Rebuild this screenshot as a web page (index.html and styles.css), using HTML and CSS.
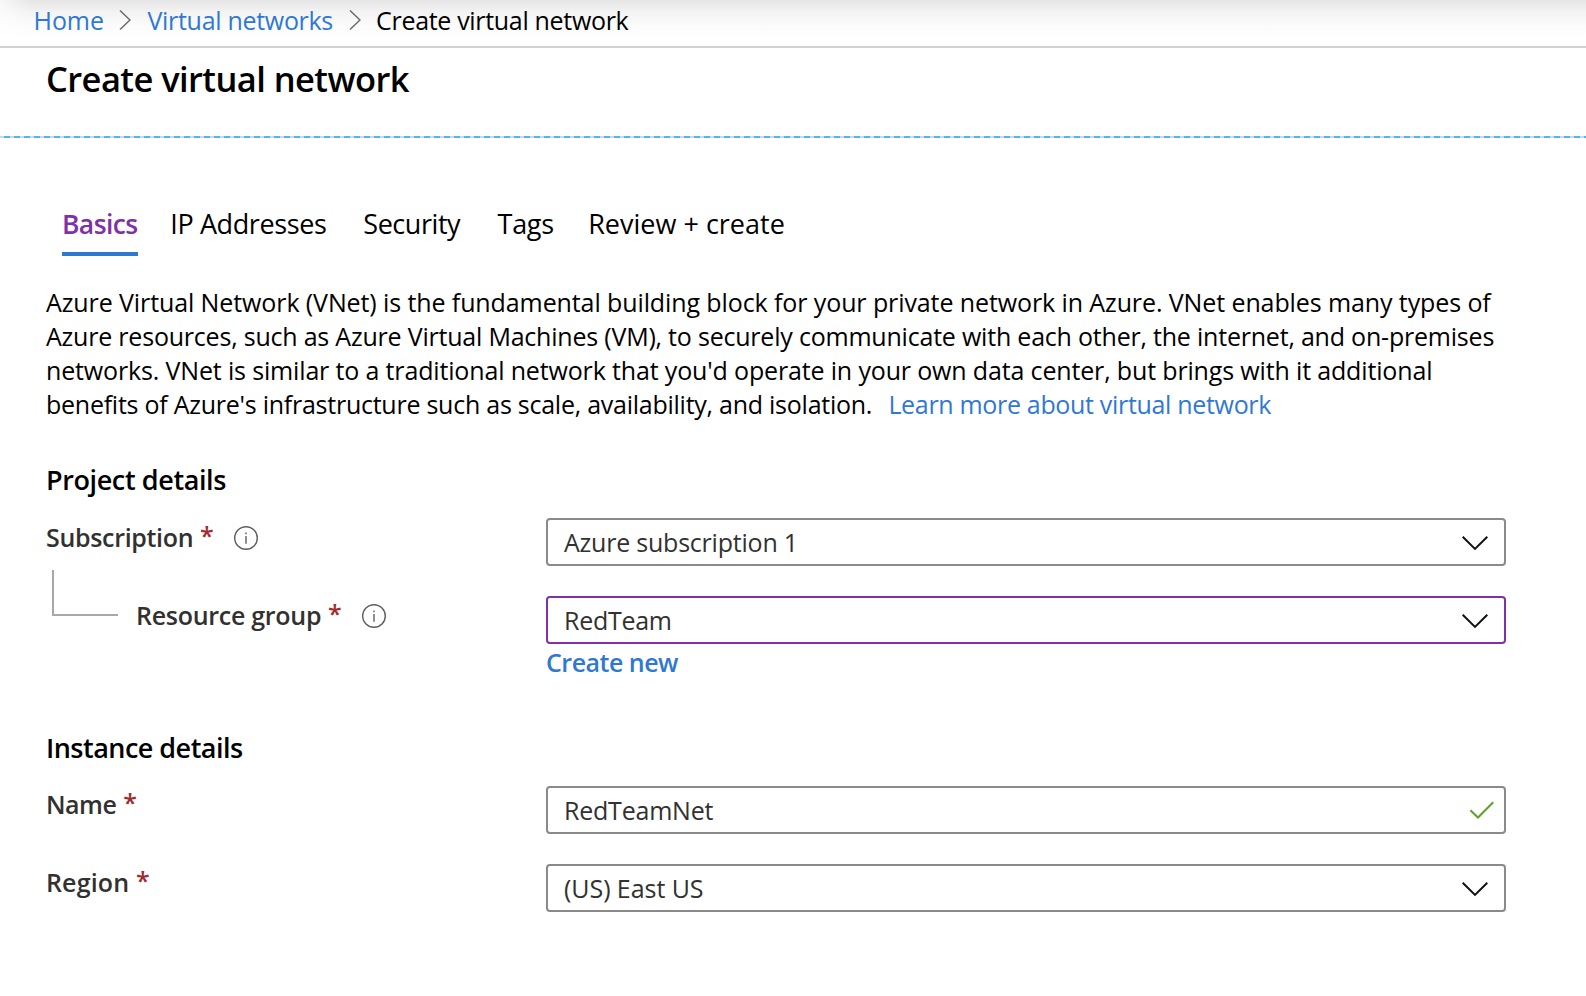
FILE: index.html
```html
<!DOCTYPE html>
<html lang="en">
<head>
<meta charset="utf-8">
<title>Create virtual network</title>
<link rel="stylesheet" href="styles.css">
</head>
<body>
<nav class="breadcrumb">
  <a class="crumb crumb-home">Home</a>
  <svg class="crumb-sep" width="12" height="22" viewBox="0 0 12 22"><path d="M1 1.5 11 11 1 20.5"/></svg>
  <a class="crumb crumb-list">Virtual networks</a>
  <svg class="crumb-sep" width="12" height="22" viewBox="0 0 12 22"><path d="M1 1.5 11 11 1 20.5"/></svg>
  <span class="crumb crumb-current">Create virtual network</span>
</nav>
<header class="page-head"><h1 class="page-title">Create virtual network</h1></header>
<div class="dashed-rule"></div>
<main class="content">
  <div class="tabs">
    <span class="tab tab-active">Basics</span>
    <span class="tab tab-ip">IP Addresses</span>
    <span class="tab tab-security">Security</span>
    <span class="tab tab-tags">Tags</span>
    <span class="tab tab-review">Review + create</span>
  </div>
  <p class="intro">
    <span class="line line-1">Azure Virtual Network (VNet) is the fundamental building block for your private network in Azure. VNet enables many types of</span>
    <span class="line line-2">Azure resources, such as Azure Virtual Machines (VM), to securely communicate with each other, the internet, and on-premises</span>
    <span class="line line-3">networks. VNet is similar to a traditional network that you'd operate in your own data center, but brings with it additional</span>
    <span class="line line-4">benefits of Azure's infrastructure such as scale, availability, and isolation.<a class="learn-more">Learn more about virtual network</a></span>
  </p>

  <section class="section project">
    <h2 class="section-title">Project details</h2>
    <div class="row">
      <div class="label"><span class="name-subscription">Subscription</span><span class="star">*</span>
        <svg class="info" width="24" height="24" viewBox="0 0 24 24"><circle cx="12" cy="12" r="11.3"/><path d="M12 9.9v7.8M12 6.5v1.8"/></svg>
      </div>
      <div class="field"><span class="value value-sub">Azure subscription 1</span>
        <svg class="chevron" width="28" height="16" viewBox="0 0 28 16"><path d="M1.7 1.7 14 13.9 26.3 1.7"/></svg>
      </div>
    </div>
    <div class="row">
      <div class="label label-nested"><span class="connector"></span><span class="name-group">Resource group</span><span class="star">*</span>
        <svg class="info" width="24" height="24" viewBox="0 0 24 24"><circle cx="12" cy="12" r="11.3"/><path d="M12 9.9v7.8M12 6.5v1.8"/></svg>
      </div>
      <div class="field-stack">
        <div class="field field-focus"><span class="value value-group">RedTeam</span>
          <svg class="chevron" width="28" height="16" viewBox="0 0 28 16"><path d="M1.7 1.7 14 13.9 26.3 1.7"/></svg>
        </div>
        <a class="create-new">Create new</a>
      </div>
    </div>
  </section>

  <section class="section instance">
    <h2 class="section-title title-instance">Instance details</h2>
    <div class="row">
      <div class="label"><span class="name-name">Name</span><span class="star">*</span></div>
      <div class="field"><span class="value value-name">RedTeamNet</span>
        <svg class="check" width="26" height="18" viewBox="0 0 26 18"><path d="M1.4 9.2 9 16.5 24.2 1.2"/></svg>
      </div>
    </div>
    <div class="row">
      <div class="label"><span class="name-region">Region</span><span class="star">*</span></div>
      <div class="field"><span class="value value-region">(US) East US</span>
        <svg class="chevron" width="28" height="16" viewBox="0 0 28 16"><path d="M1.7 1.7 14 13.9 26.3 1.7"/></svg>
      </div>
    </div>
  </section>
</main>
</body>
</html>
```
FILE: styles.css
```css
* { box-sizing: border-box; }
body {
  margin: 0;
  background: #fff;
  color: #000;
  font-family: "Open Sans", "Noto Sans", sans-serif;
  font-size: 25px;
}
svg { display: block; fill: none; flex: none; }

.breadcrumb {
  display: flex;
  height: 48px;
  padding-left: 33.6px;
  border-bottom: 2px solid #d2d2d2;
  line-height: 40px;
  white-space: nowrap;
  background:
    linear-gradient(90deg, rgba(255, 255, 255, .7), rgba(255, 255, 255, 0) 32px),
    linear-gradient(#e5e5e5, #f3f3f3 12px, #fbfbfb 25px, #fff 38px);
}
.crumb { color: #2f78d4; }
.crumb-home { letter-spacing: -.1px; }
.crumb-sep { margin: 9px 16px 0 15.6px; stroke: #6b6b6b; stroke-width: 1.5; }
.crumb-list { letter-spacing: -.3px; }
.crumb-current { color: #000; letter-spacing: -.32px; margin-left: -.5px; }

.page-head { height: 88px; padding-left: 46px; }
.page-title {
  margin: 0;
  font-size: 34.5px;
  font-weight: 600;
  line-height: 62px;
  letter-spacing: -.57px;
}
.dashed-rule {
  height: 2px;
  background: repeating-linear-gradient(90deg, #d6d6d6 0 4px, #4db8ef 4px 10px);
}

.content { padding: 60px 80px 0 46px; }
.tabs { display: flex; padding-left: 16px; font-size: 27px; line-height: 52px; white-space: nowrap; }
.tab { height: 58px; }
.tab-active {
  width: 76px;
  border-bottom: 4px solid #2f78d1;
  color: #8031a7;
  font-size: 26.5px;
  font-weight: 600;
  line-height: 53px;
  letter-spacing: -.6px;
}
.tab-ip { margin-left: 32.3px; letter-spacing: -.4px; }
.tab-security { margin-left: 36.9px; letter-spacing: -.44px; }
.tab-tags { margin-left: 37.4px; letter-spacing: -.33px; }
.tab-review { margin-left: 34.5px; }

.intro { margin: 29px 0 0; line-height: 34px; white-space: nowrap; }
.line { display: block; }
.line-1 { letter-spacing: -.1px; }
.line-2 { letter-spacing: -.21px; }
.line-3 { letter-spacing: -.153px; }
.line-4 { letter-spacing: -.25px; }
.learn-more { margin-left: 16.2px; color: #2f78d4; letter-spacing: -.32px; }

.section { display: flex; flex-direction: column; }
.project { margin-top: 40px; }
.instance { margin-top: 49px; }
.section-title {
  margin: 0 0 20px;
  font-size: 27px;
  font-weight: 600;
  line-height: 37px;
  letter-spacing: -.39px;
}
.title-instance { letter-spacing: -.52px; }
.row { display: grid; grid-template-columns: 500px 960px; }
.row + .row { margin-top: 30px; }
.label {
  position: relative;
  display: flex;
  height: 38px;
  line-height: 38px;
  color: #323130;
  font-weight: 600;
  white-space: nowrap;
}
.instance .label { line-height: 37px; }
.label-nested { padding-left: 90px; }
.star { margin: -2px 0 0 6.8px; color: #a02b2e; }
.info { margin: 8px 0 0 20px; stroke: #605e5c; stroke-width: 1.4; }
/* Elbow line tying the nested label to the row above it */
.connector {
  position: absolute;
  left: 6px;
  top: -26px;
  width: 66px;
  height: 46px;
  border: solid #a8a8a8;
  border-width: 0 0 2px 2px;
}
.name-subscription { letter-spacing: -.32px; }
.name-group { letter-spacing: -.28px; }
.name-name { letter-spacing: -.5px; }
.name-region { letter-spacing: .15px; }

.field {
  display: flex;
  align-items: center;
  justify-content: space-between;
  height: 48px;
  padding: 0 15px 0 16px;
  border: 2px solid #8a8a8a;
  border-radius: 4px;
  color: #323130;
  line-height: 44px;
}
.field-focus { border-color: #8031a7; }
.value-sub { letter-spacing: -.22px; }
.value-group { letter-spacing: -.28px; }
.value-name { letter-spacing: -.22px; }
.value-region { letter-spacing: -.06px; }
.chevron { margin-top: 2px; stroke: #111; stroke-width: 2; }
.check { margin-right: -6px; stroke: #5fa02c; stroke-width: 2; }
.create-new {
  display: block;
  color: #2f78d1;
  font-weight: 600;
  line-height: 36px;
  letter-spacing: -.5px;
}
```
